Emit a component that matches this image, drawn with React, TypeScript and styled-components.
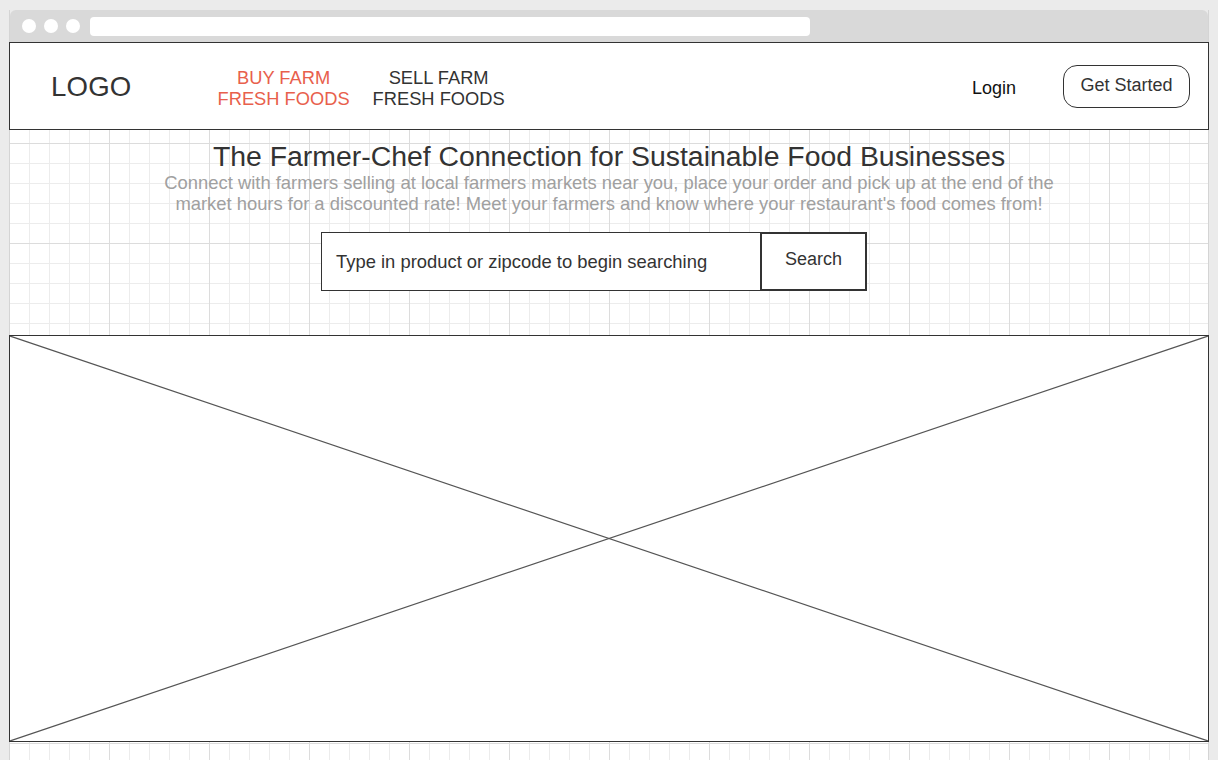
import styled, { createGlobalStyle } from "styled-components";

const GlobalStyle = createGlobalStyle`
  html, body {
    margin: 0;
    padding: 0;
    background: #ebebeb;
    font-family: "Liberation Sans", Arial, sans-serif;
    overflow: hidden;
  }
`;

const Frame = styled.div`
  margin: 10px 0 0 9px;
  width: 1200px;
  height: 750px;
  display: flex;
  flex-direction: column;
  border-left: 1px solid #d4d4d4;
  border-right: 1px solid #d4d4d4;
  box-sizing: border-box;
`;

const Chrome = styled.div`
  height: 32px;
  background: #d9d9d9;
  border-radius: 6px 6px 0 0;
  display: flex;
  align-items: center;
  padding-left: 12px;
  gap: 8px;
  flex-shrink: 0;
`;

const Dot = styled.span`
  width: 14px;
  height: 14px;
  border-radius: 50%;
  background: #fff;
`;

const UrlBar = styled.div`
  margin-left: 2px;
  width: 720px;
  height: 19px;
  background: #fff;
  border-radius: 4px;
  margin-top: 1px;
`;

const Page = styled.div`
  flex: 1;
  display: flex;
  flex-direction: column;
  background-color: #fff;
  background-image:
    linear-gradient(to right, #dcdcdc 1px, transparent 1px),
    linear-gradient(to bottom, #dcdcdc 1px, transparent 1px),
    linear-gradient(to right, #ececec 1px, transparent 1px),
    linear-gradient(to bottom, #ececec 1px, transparent 1px);
  background-size: 100px 100px, 100px 100px, 20px 20px, 20px 20px;
  background-position: -1px 1px;
`;

const Header = styled.header`
  height: 88px;
  box-sizing: border-box;
  border: 1px solid #333;
  margin: 0 -1px;
  background: #fff;
  display: flex;
  align-items: center;
  padding: 2px 18px 0 41px;
`;

const Logo = styled.div`
  font-size: 27.6px;
  color: #333;
  letter-spacing: 0.2px;
  margin-right: 86px;
`;

const NavItem = styled.a<{ $active?: boolean }>`
  font-size: 18.3px;
  line-height: 21px;
  text-align: center;
  color: ${(p) => (p.$active ? "#e8604c" : "#333")};
  text-decoration: none;
  margin-right: 23px;
  margin-top: 2px;
`;

const Spacer = styled.div`
  flex: 1;
`;

const Login = styled.a`
  font-size: 18px;
  color: #111;
  margin-right: 47px;
  margin-top: 2px;
`;

const StartButton = styled.button`
  font-family: inherit;
  font-size: 18px;
  color: #333;
  background: #fff;
  border: 1px solid #333;
  border-radius: 14px;
  width: 127px;
  height: 43px;
  padding: 0 0 2px;
  margin-top: -2px;
`;

const Hero = styled.section`
  height: 205px;
  box-sizing: border-box;
  display: flex;
  flex-direction: column;
  align-items: center;
  padding-top: 10px;
`;

const Title = styled.h1`
  margin: 0;
  font-size: 28.4px;
  font-weight: normal;
  line-height: 32px;
  color: #333;
`;

const Sub = styled.p`
  margin: 0;
  width: 940px;
  text-align: center;
  font-size: 18.4px;
  line-height: 21px;
  color: #a0a0a0;
`;

const SearchRow = styled.div`
  display: flex;
  margin-top: 18px;
  margin-left: -30px;
`;

const SearchInput = styled.div`
  width: 439px;
  height: 59px;
  box-sizing: border-box;
  border: 1px solid #333;
  border-right: none;
  background: #fff;
  display: flex;
  align-items: center;
  padding: 0 0 0 14px;
  font-size: 18.4px;
  color: #333;
`;

const SearchButton = styled.button`
  width: 107px;
  height: 59px;
  box-sizing: border-box;
  border: 2px solid #333;
  background: #fff;
  font-family: inherit;
  font-size: 18px;
  color: #333;
  padding: 0 0 4px;
`;

const Placeholder = styled.div`
  height: 407px;
  box-sizing: border-box;
  border: 1px solid #333;
  margin: 0 -1px;
  background: #fff;
  flex-shrink: 0;
  svg {
    display: block;
    width: 100%;
    height: 100%;
  }
`;

export default function App() {
  return (
    <>
      <GlobalStyle />
      <Frame>
        <Chrome>
          <Dot />
          <Dot />
          <Dot />
          <UrlBar />
        </Chrome>
        <Page>
          <Header>
            <Logo>LOGO</Logo>
            <NavItem $active>
              BUY FARM
              <br />
              FRESH FOODS
            </NavItem>
            <NavItem>
              SELL FARM
              <br />
              FRESH FOODS
            </NavItem>
            <Spacer />
            <Login>Login</Login>
            <StartButton>Get Started</StartButton>
          </Header>
          <Hero>
            <Title>The Farmer-Chef Connection for Sustainable Food Businesses</Title>
            <Sub>
              Connect with farmers selling at local farmers markets near you, place your order and pick up at the end of the
              <br />
              market hours for a discounted rate! Meet your farmers and know where your restaurant's food comes from!
            </Sub>
            <SearchRow>
              <SearchInput>Type in product or zipcode to begin searching</SearchInput>
              <SearchButton>Search</SearchButton>
            </SearchRow>
          </Hero>
          <Placeholder>
            <svg viewBox="0 0 1198 405" preserveAspectRatio="none">
              <line x1="0" y1="0" x2="1198" y2="405" stroke="#555" strokeWidth="1.2" />
              <line x1="1198" y1="0" x2="0" y2="405" stroke="#555" strokeWidth="1.2" />
            </svg>
          </Placeholder>
        </Page>
      </Frame>
    </>
  );
}
